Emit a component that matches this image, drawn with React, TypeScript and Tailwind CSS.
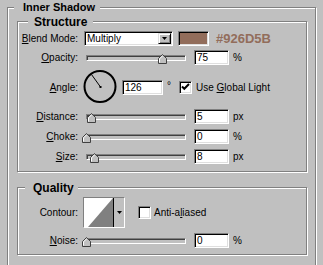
import React from 'react';

// shared 3D borders (classic dialog look)
const etched = 'border border-[#808080] shadow-[inset_1px_1px_0_#fff,1px_1px_0_#fff]';
const sunken =
  'border border-t-[#808080] border-l-[#808080] border-b-white border-r-white shadow-[inset_1px_1px_0_#000,inset_-1px_-1px_0_#dfdfdf]';
const raised =
  'border border-t-[#dfdfdf] border-l-[#dfdfdf] border-b-black border-r-black shadow-[inset_1px_1px_0_#fff,inset_-1px_-1px_0_#808080]';

function Label({ children, className = '' }: { children: React.ReactNode; className?: string }) {
  return (
    <div className={`flex h-[15px] w-[60px] shrink-0 items-center justify-end whitespace-nowrap ${className}`}>
      {children}
    </div>
  );
}

function Field({ value, width }: { value: string; width: string }) {
  return <div className={`h-[15px] ${width} ${sunken} bg-white pl-[2px] leading-[13px]`}>{value}</div>;
}

function Thumb() {
  return (
    <svg width="9" height="10" viewBox="0 0 9 10">
      <path d="M0.5 4.5 L4.5 0.5 L8.5 4.5 V9.5 H0.5 Z" fill="#c0c0c0" stroke="#404040" />
      <path d="M1.5 8.5 V4.9 L4.5 1.9" fill="none" stroke="#fff" />
    </svg>
  );
}

function Slider({ left }: { left: number }) {
  return (
    <div
      className={`relative ml-[8px] h-[6px] w-[100px] border border-t-[#808080] border-l-[#808080] border-b-white border-r-white bg-[#c0c0c0] shadow-[inset_1px_1px_0_#404040]`}
    >
      <div className="absolute top-[-2px]" style={{ left: left - 1 }}>
        <Thumb />
      </div>
    </div>
  );
}

function Arrow() {
  return (
    <svg width="5" height="3" viewBox="0 0 5 3">
      <path d="M0 0 H5 L2.5 3 Z" fill="#000" />
    </svg>
  );
}

function Checkbox({ checked }: { checked?: boolean }) {
  return (
    <div className={`h-[13px] w-[13px] shrink-0 ${sunken} bg-white`}>
      {checked && (
        <svg width="11" height="11" viewBox="0 0 11 11">
          <path d="M2 4.5 L4.3 6.8 L9 2" fill="none" stroke="#000" strokeWidth="2" />
        </svg>
      )}
    </div>
  );
}

function SliderRow({ label, left, value, unit, className = '' }: { label: React.ReactNode; left: number; value: string; unit: string; className?: string }) {
  return (
    <div className={`flex h-[15px] items-center ${className}`}>
      <Label>{label}</Label>
      <Slider left={left} />
      <div className="ml-[8px]">
        <Field value={value} width="w-[35px]" />
      </div>
      <span className="ml-[4px]">{unit}</span>
    </div>
  );
}

export default function App() {
  return (
    <div className="h-[265px] w-[323px] overflow-hidden bg-[#c0c0c0] pl-[7px] pt-[7px] font-['Liberation_Sans',Arial,sans-serif] text-[10px] leading-[12px] text-black">
      <div className={`h-[300px] w-[309px] ${etched}`}>
        <div className="-mt-[7px] ml-[6px] w-fit bg-[#c0c0c0] pl-[9px] pr-[5px] text-[11px] font-bold leading-[13px]">
          Inner Shadow
        </div>

        {/* Structure */}
        <div className={`ml-[9px] mt-[7px] h-[151px] w-[290px] ${etched}`}>
          <div className="-mt-[7px] ml-[10px] w-fit bg-[#c0c0c0] pl-[6px] pr-[6px] text-[12px] font-bold leading-[14px]">
            Structure
          </div>

          <div className="mt-[2px] flex h-[15px] items-center">
            <Label>
              <u>B</u>lend Mode:
            </Label>
            <div className={`ml-[6px] flex h-[15px] w-[89px] p-[1px] ${sunken} bg-white`}>
              <span className="flex-1 pl-[1px] leading-[11px]">Multiply</span>
              <div className={`flex h-[11px] w-[13px] items-center justify-center bg-[#c0c0c0] ${raised}`}>
                <Arrow />
              </div>
            </div>
            <div className={`ml-[5px] h-[15px] w-[31px] ${sunken} bg-[#926D5B]`} />
            <span className="ml-[7px] text-[13px] font-bold text-[#926D5B]">#926D5B</span>
          </div>

          <SliderRow className="mt-[4px]" label={<><u>O</u>pacity:</>} left={72} value="75" unit="%" />

          <div className="mt-[4px] flex h-[34px] items-start">
            <Label className="mt-[11px]">
              <u>A</u>ngle:
            </Label>
            <svg className="ml-[5px]" width="34" height="34" viewBox="0 0 34 34">
              <circle cx="17" cy="17.5" r="15.5" fill="none" stroke="#000" strokeWidth="2" />
              <line x1="17.5" y1="18" x2="8.5" y2="5.5" stroke="#000" />
              <rect x="16.5" y="17" width="2" height="2" fill="#000" />
            </svg>
            <div className="ml-[5px] mt-[11px] flex h-[15px] items-center">
              <Field value="126" width="w-[41px]" />
              <span className="ml-[4px] -mt-[4px]">°</span>
              <div className="ml-[8px]">
                <Checkbox checked />
              </div>
              <span className="ml-[4px] whitespace-nowrap">
                Use <u>G</u>lobal Light
              </span>
            </div>
          </div>

          <SliderRow className="mt-[6px]" label={<><u>D</u>istance:</>} left={1} value="5" unit="px" />
          <SliderRow className="mt-[5px]" label={<><u>C</u>hoke:</>} left={-4} value="0" unit="%" />
          <SliderRow className="mt-[5px]" label={<><u>S</u>ize:</>} left={4} value="8" unit="px" />
        </div>

        {/* Quality */}
        <div className={`ml-[9px] mt-[15px] h-[68px] w-[290px] ${etched}`}>
          <div className="-mt-[7px] ml-[7px] w-fit bg-[#c0c0c0] pl-[8px] pr-[4px] text-[12px] font-bold leading-[14px]">
            Quality
          </div>

          <div className="mt-[2px] flex h-[31px] items-center">
            <Label>Contour:</Label>
            <div className={`ml-[5px] flex h-[31px] w-[42px] ${sunken}`}>
              <svg width="29" height="29" viewBox="0 0 29 29">
                <rect width="29" height="29" fill="#fff" />
                <path d="M4 29 L29 0 V29 Z" fill="#808080" />
              </svg>
              <div className="flex w-[11px] items-center justify-center border-l border-black bg-[#c0c0c0]">
                <Arrow />
              </div>
            </div>
            <div className="ml-[13px]">
              <Checkbox />
            </div>
            <span className="ml-[3px] whitespace-nowrap">
              Anti-a<u>l</u>iased
            </span>
          </div>

          <SliderRow className="mt-[5px]" label={<><u>N</u>oise:</>} left={-4} value="0" unit="%" />
        </div>
      </div>
    </div>
  );
}
